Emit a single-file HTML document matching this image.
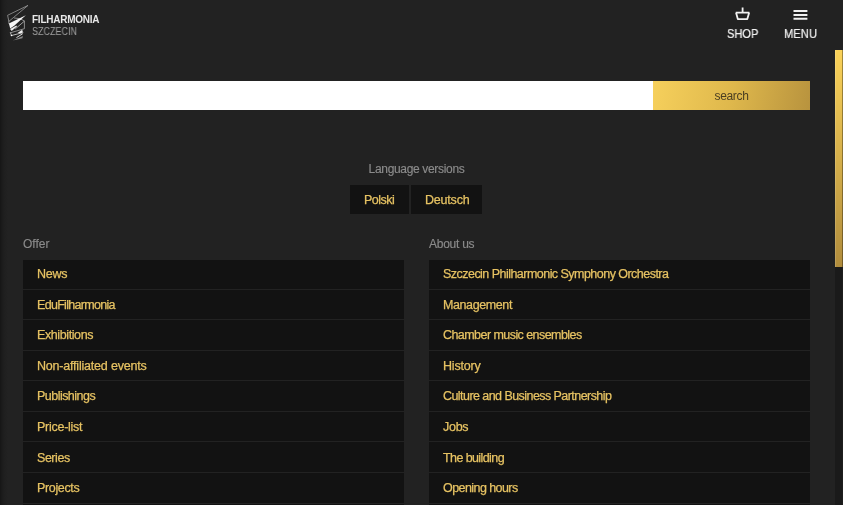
<!DOCTYPE html>
<html><head><meta charset="utf-8">
<style>
*{margin:0;padding:0;box-sizing:border-box}
html,body{width:843px;height:505px;overflow:hidden;background:#222222;font-family:"Liberation Sans",sans-serif}
div{position:absolute;white-space:nowrap}
.edge{left:0;top:0;width:9px;height:505px;background:linear-gradient(90deg,#161616 0,#1b1b1b 2px,#1f1f1f 4px,#222 8px)}
.logo{position:absolute;left:0;top:0}
.brand1{left:32px;top:14px;font-size:10px;font-weight:bold;color:#e8e8e8;letter-spacing:-0.24px;line-height:12px}
.brand2{left:32px;top:26px;font-size:10px;color:#a0a0a0;line-height:12px;transform-origin:0 0;transform:scaleX(0.9)}
.nav{top:26px;color:#f2f2f2;-webkit-text-stroke:0.2px #f2f2f2;font-size:13px;line-height:15px;transform-origin:0 0}
.search{left:23px;top:81px;width:630px;height:29px;background:#fff}
.sbtn{left:653px;top:81px;width:157px;height:29px;background:linear-gradient(100deg,#f6d05c 0%,#dfb84c 50%,#b8933e 100%)}
.stxt{left:653px;top:82px;width:157px;height:29px;color:#4a3e22;font-size:12px;letter-spacing:-0.35px;text-align:center;line-height:29px}
.lv{left:0;width:833px;top:162px;text-align:center;color:#8b8b8b;font-size:12px;letter-spacing:-0.33px;line-height:14px}
.lb{top:185px;height:29px;background:#121212}
.lbt{top:186px;height:29px;color:#e7c363;font-size:12.5px;letter-spacing:-0.53px;line-height:29px}
.lab{top:237px;color:#8b8b8b;font-size:12px;line-height:14px}
.row{width:381px;background:#121212}
.rt{color:#e7c363;font-size:12.5px;line-height:14px;letter-spacing:-0.53px;-webkit-text-stroke:0.25px #e7c363}
.layer{left:0;top:0;width:843px;height:505px;will-change:transform}
.track{left:835px;top:50px;width:8px;height:455px;background:#1a1a1a;box-shadow:inset -1px 0 #1e1e1e}
.sb{left:835px;top:50px;width:8px;height:217px;background:linear-gradient(180deg,#fad259,#b08c3c);box-shadow:inset -1px 0 rgba(0,0,0,0.35),inset 1px 0 rgba(255,255,255,0.15)}
.brand1,.brand2,.nav,.stxt,.lv,.lbt,.lab{will-change:transform}
.lbt{-webkit-text-stroke:0.25px #e7c363}
.lab,.lv{-webkit-text-stroke:0.15px #8b8b8b}
</style></head><body>
<div class="edge"></div>
<svg class="logo" width="40" height="50" viewBox="0 0 40 50">
 <g fill="none" stroke-linejoin="round" stroke-linecap="round">
  <path d="M27.6 5.6L7.6 15.3L8.8 21Z M8.8 21L8.9 23.5" stroke="#a0a0a0" stroke-width="0.75"/>
  <path d="M14.5 18Q20 17.8 24.4 20.9L24.4 28.7L11.1 32.6" stroke="#a8a8a8" stroke-width="0.8"/>
  <path d="M15.5 28.7L24 21.5" stroke="#bdbdbd" stroke-width="0.8"/>
  <path d="M10.4 32.6L11.5 35.5L22.9 32.6" stroke="#c8c8c8" stroke-width="0.9"/>
  <path d="M16.8 37.4L22.4 33.9" stroke="#d8d8d8" stroke-width="1"/>
 </g>
 <polygon fill="#f6f6f6" points="8.9,23.5 25.8,15.3 14.5,25.4 10.2,28.4"/>
 <polygon fill="#eaeaea" points="10.1,29.1 16.4,25.6 17,26.6 11.6,31"/>
 <polygon fill="#f0f0f0" points="17.6,32.9 22.2,29.8 22.7,31.6 21.6,33.3"/>
 <polygon fill="#8a8a8a" points="12.8,40.5 22.9,36.1 22.4,38.3"/>
 <circle cx="11.5" cy="35.5" r="0.8" fill="#fff"/>
</svg>
<div class="brand1">FILHARMONIA</div>
<div class="brand2">SZCZECIN</div>
<svg width="843" height="30" style="position:absolute;left:0;top:0" viewBox="0 0 843 30">
 <path d="M742.6 7.5v5M735.8 12.6h13.6M736 12.6l1.8 6.5h9.5l1.9-6.5" fill="none" stroke="#f2f2f2" stroke-width="1.8" stroke-linejoin="round"/>
 <path d="M793.5 11h13.9M793.5 14.9h13.9M793.5 18.7h13.9" fill="none" stroke="#f2f2f2" stroke-width="2"/>
</svg>
<div class="nav" style="left:727px;transform:scaleX(0.85)">SHOP</div>
<div class="nav" style="left:784px;transform:scaleX(0.86)">MENU</div>
<div class="search"></div>
<div class="sbtn"></div>
<div class="stxt">search</div>
<div class="lv">Language versions</div>
<div class="lb" style="left:350px;width:59px"></div>
<div class="lb" style="left:411px;width:71px"></div>
<div class="lbt" style="left:364px">Polski</div>
<div class="lbt" style="left:425px;letter-spacing:-0.2px">Deutsch</div>
<div class="lab" style="left:23px">Offer</div>
<div class="lab" style="left:429px;letter-spacing:-0.26px">About us</div>
<div class="row" style="left:23px;top:260px;height:29px"></div>
<div class="row" style="left:23px;top:290px;height:29px"></div>
<div class="row" style="left:23px;top:320px;height:30px"></div>
<div class="row" style="left:23px;top:351px;height:29px"></div>
<div class="row" style="left:23px;top:381px;height:30px"></div>
<div class="row" style="left:23px;top:412px;height:29px"></div>
<div class="row" style="left:23px;top:442px;height:30px"></div>
<div class="row" style="left:23px;top:473px;height:30px"></div>
<div class="row" style="left:23px;top:504px;height:30px"></div>
<div class="row" style="left:429px;top:260px;height:29px"></div>
<div class="row" style="left:429px;top:290px;height:29px"></div>
<div class="row" style="left:429px;top:320px;height:30px"></div>
<div class="row" style="left:429px;top:351px;height:29px"></div>
<div class="row" style="left:429px;top:381px;height:30px"></div>
<div class="row" style="left:429px;top:412px;height:29px"></div>
<div class="row" style="left:429px;top:442px;height:30px"></div>
<div class="row" style="left:429px;top:473px;height:30px"></div>
<div class="row" style="left:429px;top:504px;height:30px"></div>
<div class="layer">
<div class="rt" style="left:37px;top:267.20px;letter-spacing:-0.267px">News</div>
<div class="rt" style="left:37px;top:298.37px;letter-spacing:-0.692px">EduFilharmonia</div>
<div class="rt" style="left:37px;top:328.34px;letter-spacing:-0.4px">Exhibitions</div>
<div class="rt" style="left:37px;top:358.91px;letter-spacing:-0.2px">Non-affiliated events</div>
<div class="rt" style="left:37px;top:389.48px;letter-spacing:-0.53px">Publishings</div>
<div class="rt" style="left:37px;top:420.05px;letter-spacing:-0.267px">Price-list</div>
<div class="rt" style="left:37px;top:450.62px;letter-spacing:-0.46px">Series</div>
<div class="rt" style="left:37px;top:481.19px;letter-spacing:-0.343px">Projects</div>
<div class="rt" style="left:443px;top:267.20px;letter-spacing:-0.531px">Szczecin Philharmonic Symphony Orchestra</div>
<div class="rt" style="left:443px;top:298.37px;letter-spacing:-0.4px">Management</div>
<div class="rt" style="left:443px;top:328.34px;letter-spacing:-0.555px">Chamber music ensembles</div>
<div class="rt" style="left:443px;top:358.91px;letter-spacing:-0.2px">History</div>
<div class="rt" style="left:443px;top:389.48px;letter-spacing:-0.558px">Culture and Business Partnership</div>
<div class="rt" style="left:443px;top:420.05px;letter-spacing:-0.267px">Jobs</div>
<div class="rt" style="left:443px;top:450.62px;letter-spacing:-0.591px">The building</div>
<div class="rt" style="left:443px;top:481.19px;letter-spacing:-0.567px">Opening hours</div>
</div>
<div class="track"></div>
<div class="sb"></div>
</body></html>
